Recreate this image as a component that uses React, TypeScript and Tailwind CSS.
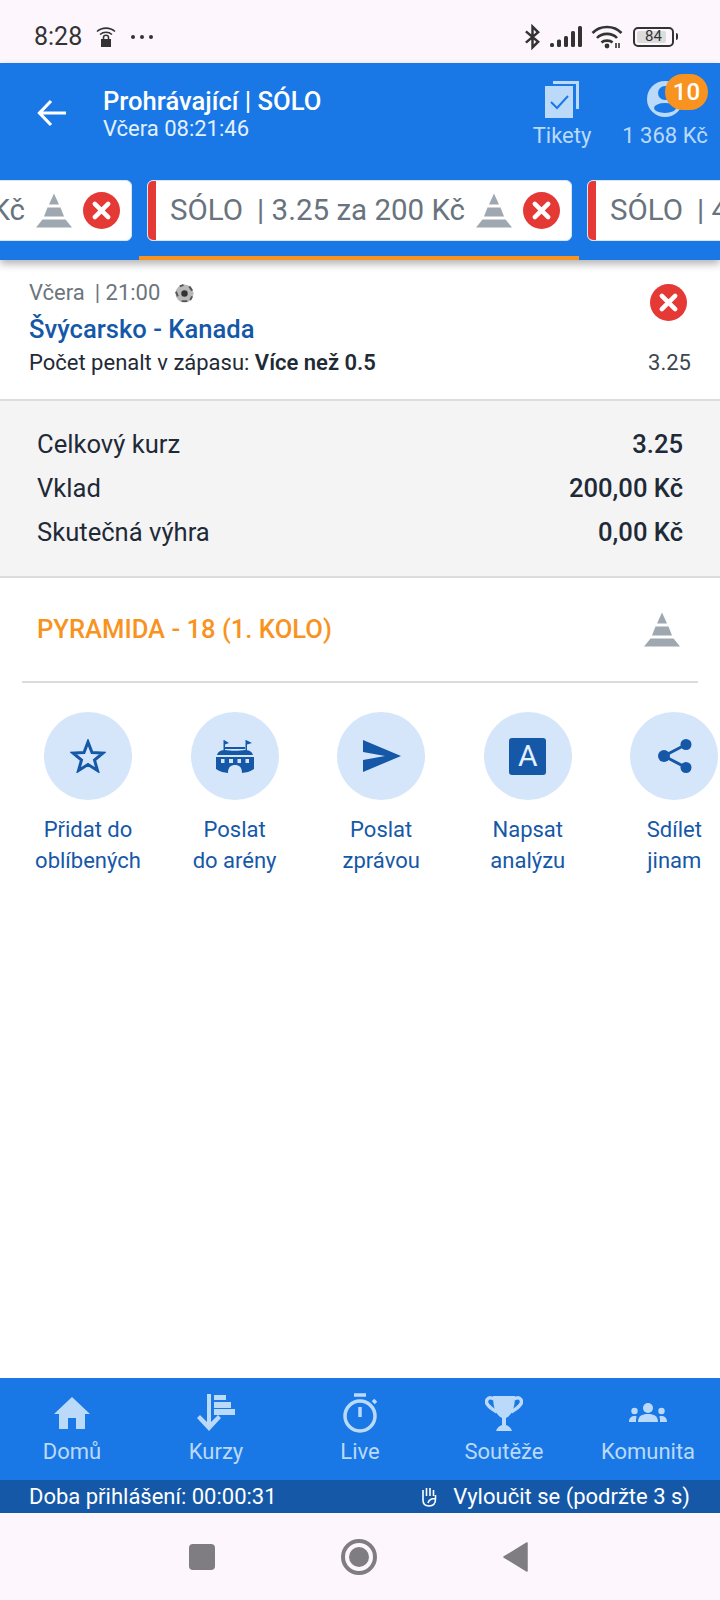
const font = { fontFamily: "Roboto, sans-serif" };

function Pyramid({ className }: { className: string }) {
  return (
    <svg viewBox="0 0 36 34" className={className} fill="#9fa8b0">
      <path d="M18 0 L23 11 H13 Z" />
      <path d="M11.5 14 H24.5 L28 23 H8 Z" />
      <path d="M6.5 26 H29.5 L36 34 H0 Z" />
    </svg>
  );
}

function Cross({ className }: { className: string }) {
  return (
    <svg viewBox="0 0 36 36" className={className}>
      <circle cx="18" cy="18" r="18" fill="#e53935" />
      <path d="M11.5 11.5 L24.5 24.5 M24.5 11.5 L11.5 24.5" stroke="#fff" strokeWidth="4.4" strokeLinecap="round" />
    </svg>
  );
}

function BetTab({ odds, red }: { odds: string; red?: boolean }) {
  return (
    <div className="relative flex h-[61px] w-[425px] shrink-0 items-center overflow-hidden rounded-[6px] border border-[#d6e6fa] bg-white pl-[22px] pr-[11px]">
      {red && <div className="absolute bottom-0 left-0 top-0 w-[8px] bg-[#e53935]" />}
      <span className="flex-1 whitespace-nowrap text-[29.5px] text-[#68737d]">
        SÓLO<span className="ml-[14px]">| {odds}</span>
      </span>
      <Pyramid className="mr-[11px] h-[35px] w-[36px] shrink-0" />
      <Cross className="h-[37px] w-[37px] shrink-0" />
    </div>
  );
}

function StatusBar() {
  return (
    <div className="flex h-[63px] shrink-0 items-center bg-[#fdf7fd] pl-[34px] pr-[42px] pt-[10px] text-[#333]">
      <span className="text-[25px] leading-none">8:28</span>
      <svg viewBox="0 0 20 22" className="ml-[14px] h-[22px] w-[20px]" fill="none" stroke="#333" strokeWidth="1.6">
        <path d="M1 5.5 C6 1 14 1 19 5.5 M4 8.5 C7.5 5.5 12.5 5.5 16 8.5" />
        <path d="M5 13 H15 V21 H5 Z" fill="#333" stroke="none" />
        <path d="M7.5 13 V11.5 C7.5 8.5 12.5 8.5 12.5 11.5 V13" />
      </svg>
      <div className="ml-[15px] flex gap-[5px]">
        <span className="h-[4px] w-[4px] rounded-full bg-[#333]" />
        <span className="h-[4px] w-[4px] rounded-full bg-[#333]" />
        <span className="h-[4px] w-[4px] rounded-full bg-[#333]" />
      </div>
      <div className="flex-1" />
      <svg viewBox="0 0 18 26" className="h-[26px] w-[17px]" fill="none" stroke="#333" strokeWidth="2.6">
        <path d="M2 7 L15 18 L9 24 V2 L15 8 L2 19" />
      </svg>
      <svg viewBox="0 0 32 21" className="ml-[9px] h-[21px] w-[32px]" fill="#333">
        <rect x="0" y="17" width="4" height="4" rx="1.5" />
        <rect x="7" y="13.5" width="4" height="7.5" rx="1.5" />
        <rect x="14" y="10" width="4" height="11" rx="1.5" />
        <rect x="21" y="5" width="4" height="16" rx="1.5" />
        <rect x="28" y="0" width="4" height="21" rx="1.5" />
      </svg>
      <svg viewBox="0 0 32 24" className="ml-[9px] h-[24px] w-[32px]" fill="none" stroke="#333" strokeWidth="2.6">
        <path d="M1.5 8 C9 0 23 0 30.5 8 M6 13 C11 7.5 21 7.5 26 13 M10.5 17.5 C13 15 19 15 21.5 17.5" />
        <circle cx="16" cy="21" r="2.4" fill="#333" stroke="none" />
        <path d="M25 18 V23 M28 18 V23" strokeWidth="1.6" />
      </svg>
      <div className="relative ml-[10px] flex h-[20px] w-[41px] items-center justify-center rounded-[5px] border-2 border-[#333] text-[15px] leading-none">
        <div className="absolute bottom-[2px] left-[2px] top-[2px] w-[29px] rounded-[2px] bg-[#dcdcdc]" />
        <span className="relative">84</span>
      </div>
      <div className="ml-[2px] h-[7px] w-[2px] rounded-r-full bg-[#333]" />
    </div>
  );
}

function Header() {
  return (
    <div className="relative z-10 shrink-0 bg-[#1a78e6] shadow-[0_4px_8px_rgba(0,0,0,0.3)]">
      <div className="flex h-[117px] items-start">
        <svg viewBox="0 0 30 28" className="ml-[37px] mt-[36px] h-[28px] w-[30px]" fill="none" stroke="#fff" strokeWidth="3.2">
          <path d="M29 14 H3 M14 2 L2.5 14 L14 26" />
        </svg>
        <div className="ml-[36px] mt-[22px] flex-1 text-white">
          <div className="text-[25.6px] font-medium leading-[32px]">Prohrávající | SÓLO</div>
          <div className="text-[22px] leading-[24px] text-[#e3f0fd]">Včera 08:21:46</div>
        </div>
        <div className="relative mr-[31px] mt-[18px] flex w-[60px] flex-col items-center">
          <svg viewBox="0 0 34 37" className="h-[37px] w-[34px]">
            <path d="M8 0 H34 V28 H31 V3 H8 Z" fill="#bbdafa" />
            <rect x="0" y="5" width="28" height="32" fill="#bbdafa" />
            <path d="M6 21 L12 27 L23 15" fill="none" stroke="#1a78e6" strokeWidth="2" />
          </svg>
          <span className="mt-[4px] whitespace-nowrap text-[22px] leading-[28px] text-[#bbdafa]">Tikety</span>
        </div>
        <div className="relative mr-[13px] mt-[18px] flex w-[84px] flex-col items-center">
          <svg viewBox="0 0 36 36" className="h-[36px] w-[36px]">
            <circle cx="18" cy="18" r="18" fill="#bbdafa" />
            <circle cx="18" cy="12" r="7" fill="#1a78e6" />
            <ellipse cx="18" cy="27" rx="11" ry="5" fill="#1a78e6" />
          </svg>
          <span className="absolute left-[42px] top-[-7px] flex h-[36px] w-[43px] items-center justify-center rounded-full bg-[#f7931e] text-[24px] font-medium leading-none text-white">10</span>
          <span className="mt-[5px] whitespace-nowrap text-[22px] leading-[28px] text-[#bbdafa]">1 368 Kč</span>
        </div>
      </div>
      <div className="flex h-[80px] gap-[15px] overflow-hidden">
        <div className="-ml-[293px] shrink-0">
          <BetTab odds="3.25 za 200 Kč" />
        </div>
        <BetTab red odds="3.25 za 200 Kč" />
        <BetTab red odds="4.10 za 200 Kč" />
      </div>
      <div className="absolute bottom-0 left-[139px] h-[4px] w-[440px] bg-[#f7931e]" />
    </div>
  );
}

function BetRow() {
  return (
    <div className="relative h-[141px] shrink-0 border-b-2 border-[#dcdcdc] bg-white pl-[29px] pr-[29px] pt-[20px]">
      <div className="flex items-center text-[22px] leading-[26px] text-[#6c757d]">
        <span>Včera</span>
        <span className="ml-[10px]">| 21:00</span>
        <svg viewBox="0 0 20 20" className="ml-[15px] h-[19px] w-[19px]">
          <circle cx="10" cy="10" r="9.5" fill="#b8b8b8" />
          <circle cx="10" cy="10" r="3.4" fill="#333" />
          <path d="M5 2.5 L9 1 M15 2.5 L18 7 M1 8 L3 13 M7 18 L13 18 M18 13 L16 17" stroke="#555" strokeWidth="2" />
        </svg>
      </div>
      <div className="mt-[8px] text-[25.6px] font-medium leading-[30px] text-[#1558a8]">Švýcarsko - Kanada</div>
      <div className="mt-[6px] flex justify-between text-[22px] leading-[26px] text-[#1f2a37]">
        <span>
          Počet penalt v zápasu: <span className="font-semibold">Více než 0.5</span>
        </span>
        <span className="text-[#3c4650]">3.25</span>
      </div>
      <Cross className="absolute right-[33px] top-[24px] h-[37px] w-[37px]" />
    </div>
  );
}

function Summary() {
  const rows = [
    ["Celkový kurz", "3.25"],
    ["Vklad", "200,00 Kč"],
    ["Skutečná výhra", "0,00 Kč"],
  ];
  return (
    <div className="flex h-[177px] shrink-0 flex-col gap-[14px] border-b-2 border-[#dcdcdc] bg-[#f4f4f5] pl-[37px] pr-[37px] pt-[28px]">
      {rows.map(([label, value]) => (
        <div key={label} className="flex h-[30px] items-center justify-between text-[25.6px] leading-[30px] text-[#1f2a37]">
          <span>{label}</span>
          <span className="font-medium">{value}</span>
        </div>
      ))}
    </div>
  );
}

const ink = "#1558a8";

const actions: { lines: [string, string]; icon: React.ReactNode }[] = [
  {
    lines: ["Přidat do", "oblíbených"],
    icon: (
      <svg viewBox="0 0 36 34" className="h-[34px] w-[36px]">
        <path d="M18 3 L22 13.5 L33 14 L24.5 21 L27.5 31.5 L18 25.5 L8.5 31.5 L11.5 21 L3 14 L14 13.5 Z" fill="none" stroke={ink} strokeWidth="3" />
      </svg>
    ),
  },
  {
    lines: ["Poslat", "do arény"],
    icon: (
      <svg viewBox="0 0 38 33" className="h-[33px] w-[38px]" fill={ink}>
        <path d="M7.5 0 V10 H9 V4.5 L13 3 L8 0 Z M29.5 0 V10 H31 V4.5 L36 3 L30 0 Z" />
        <path d="M9 7 H29 V9 H9 Z" />
        <path d="M1 15 C2 11 6 10 9 10 C14 11 24 11 29 10 C32 10 36 11 37 15 Z" />
        <path fillRule="evenodd" d="M0 17 H38 V29 C34 32 30 32.5 26 33 C26 27 23 25 19 25 C15 25 12 27 12 33 C8 32.5 4 32 0 29 Z M5 19 V23 H8.5 V19 Z M13 19 V23 H17 V19 Z M21.5 19 V23 H25 V19 Z M29.5 19 V23 H33 V19 Z" />
      </svg>
    ),
  },
  {
    lines: ["Poslat", "zprávou"],
    icon: (
      <svg viewBox="0 0 38 32" className="ml-[2px] h-[32px] w-[38px]" fill={ink}>
        <path d="M0 0 L38 16 L0 32 V20 L22 16 L0 12 Z" />
      </svg>
    ),
  },
  {
    lines: ["Napsat", "analýzu"],
    icon: (
      <div className="flex h-[37px] w-[37px] items-center justify-center rounded-[3px] bg-[#1558a8] text-[30px] leading-none text-[#e3f0fd]">A</div>
    ),
  },
  {
    lines: ["Sdílet", "jinam"],
    icon: (
      <svg viewBox="0 0 34 34" className="ml-[2px] h-[34px] w-[34px]" fill={ink}>
        <circle cx="6" cy="17" r="6" />
        <circle cx="28" cy="5.5" r="5.5" />
        <circle cx="28" cy="28.5" r="5.5" />
        <path d="M6 17 L28 5.5 M6 17 L28 28.5" stroke={ink} strokeWidth="3" />
      </svg>
    ),
  },
];

function Actions() {
  return (
    <div className="mt-[29px] flex gap-[58.6px] overflow-hidden pl-[44px]">
      {actions.map((a) => (
        <div key={a.lines[0] + a.lines[1]} className="flex w-[88px] shrink-0 flex-col items-center">
          <div className="flex h-[88px] w-[88px] items-center justify-center rounded-full bg-[#d5e6fa]">{a.icon}</div>
          <div className="mt-[14px] whitespace-nowrap text-center text-[22px] leading-[31px] text-[#1558a8]">
            <div>{a.lines[0]}</div>
            <div>{a.lines[1]}</div>
          </div>
        </div>
      ))}
    </div>
  );
}

const tint = "#bbdafa";

const navItems: { label: string; icon: React.ReactNode }[] = [
  {
    label: "Domů",
    icon: (
      <svg viewBox="0 0 36 32" className="h-[32px] w-[36px]" fill={tint}>
        <path d="M18 0 L36 17 H31 V32 H22 V21 H14 V32 H5 V17 H0 Z" />
      </svg>
    ),
  },
  {
    label: "Kurzy",
    icon: (
      <svg viewBox="0 0 38 38" className="h-[38px] w-[38px]" fill={tint}>
        <path d="M10 0 H14 V28 L21 21 L24 24 L12 37 L0 24 L3 21 L10 28 Z" />
        <rect x="17" y="1" width="12" height="5" />
        <rect x="17" y="8" width="17" height="6" />
        <rect x="17" y="15" width="21" height="6" />
      </svg>
    ),
  },
  {
    label: "Live",
    icon: (
      <svg viewBox="0 0 36 40" className="h-[40px] w-[36px]" fill="none" stroke={tint} strokeWidth="3.5">
        <circle cx="18" cy="23" r="15" />
        <path d="M12 2 H24 M18 14 V24 M31 7 L34 10" />
      </svg>
    ),
  },
  {
    label: "Soutěže",
    icon: (
      <svg viewBox="0 0 38 38" className="h-[38px] w-[38px]">
        <path d="M9 5 C2 1 0 8 3 11 C5 14 9 16 12 18 M29 5 C36 1 38 8 35 11 C33 14 29 16 26 18" fill="none" stroke={tint} strokeWidth="3.4" />
        <path d="M8 2 H30 C30 14 27 21 21 24 V31 C24 32 26 34 27 37 H11 C12 34 14 32 17 31 V24 C11 21 8 14 8 2 Z" fill={tint} />
      </svg>
    ),
  },
  {
    label: "Komunita",
    icon: (
      <svg viewBox="0 0 38 20" className="h-[20px] w-[38px]" fill={tint}>
        <circle cx="19" cy="5" r="5" />
        <circle cx="5.5" cy="8" r="3.2" />
        <circle cx="32.5" cy="8" r="3.2" />
        <path d="M9 19 C9 13 13 11 19 11 C25 11 29 13 29 19 Z" />
        <path d="M0 19 C0 14 3 12.5 7.5 13 C7 15 7 17 7 19 Z M38 19 C38 14 35 12.5 30.5 13 C31 15 31 17 31 19 Z" />
      </svg>
    ),
  },
];

function BottomNav() {
  return (
    <div className="grid h-[102px] shrink-0 grid-cols-5 bg-[#1a78e6]">
      {navItems.map((n) => (
        <div key={n.label} className="flex flex-col items-center">
          <div className="flex h-[62px] w-full items-center justify-center pt-[8px]">{n.icon}</div>
          <span className="whitespace-nowrap text-[22px] leading-[24px] text-[#bbdafa]">{n.label}</span>
        </div>
      ))}
    </div>
  );
}

function SessionBar() {
  return (
    <div className="flex h-[33px] shrink-0 items-center justify-between bg-[#1558a8] pl-[29px] pr-[30px] text-[22px] leading-none text-white">
      <span>Doba přihlášení: 00:00:31</span>
      <div className="flex items-center">
        <svg viewBox="0 0 16 20" className="mr-[16px] h-[20px] w-[16px]" fill="none" stroke="#fff" strokeWidth="1.6">
          <path d="M2 9 V3 M5.5 9 V1 M9 9 V1 M12.5 9 V3 M2 9 V13 C2 17 4 19 8 19 C12 19 14.5 17 14.5 12 V8 M7 16 C8 12.5 10 11.5 14 11.5" />
        </svg>
        <span>Vyloučit se (podržte 3 s)</span>
      </div>
    </div>
  );
}

function SystemNav() {
  return (
    <div className="flex h-[87px] shrink-0 items-center justify-center bg-[#fdf7fd] pr-[3px]">
      <div className="h-[26px] w-[26px] rounded-[4px] bg-[#7f7d82]" />
      <div className="ml-[126px] flex h-[36px] w-[36px] items-center justify-center rounded-full border-[4px] border-[#7f7d82]">
        <div className="h-[20px] w-[20px] rounded-full bg-[#7f7d82]" />
      </div>
      <svg viewBox="0 0 25 30" className="ml-[126px] h-[30px] w-[25px]" fill="#7f7d82">
        <path d="M24 1 V29 L1 15 Z" stroke="#7f7d82" strokeWidth="1.5" strokeLinejoin="round" />
      </svg>
    </div>
  );
}

export default function App() {
  return (
    <div className="flex h-[1600px] w-[720px] flex-col overflow-hidden bg-white" style={font}>
      <StatusBar />
      <Header />
      <BetRow />
      <Summary />
      <div className="flex-1">
        <div className="mx-[22px] flex h-[105px] items-center justify-between border-b-2 border-[#dcdcdc] pl-[15px] pr-[18px]">
          <span className="text-[25.6px] font-medium text-[#f7931e]">PYRAMIDA - 18 (1. KOLO)</span>
          <Pyramid className="h-[35px] w-[36px]" />
        </div>
        <Actions />
      </div>
      <BottomNav />
      <SessionBar />
      <SystemNav />
    </div>
  );
}
